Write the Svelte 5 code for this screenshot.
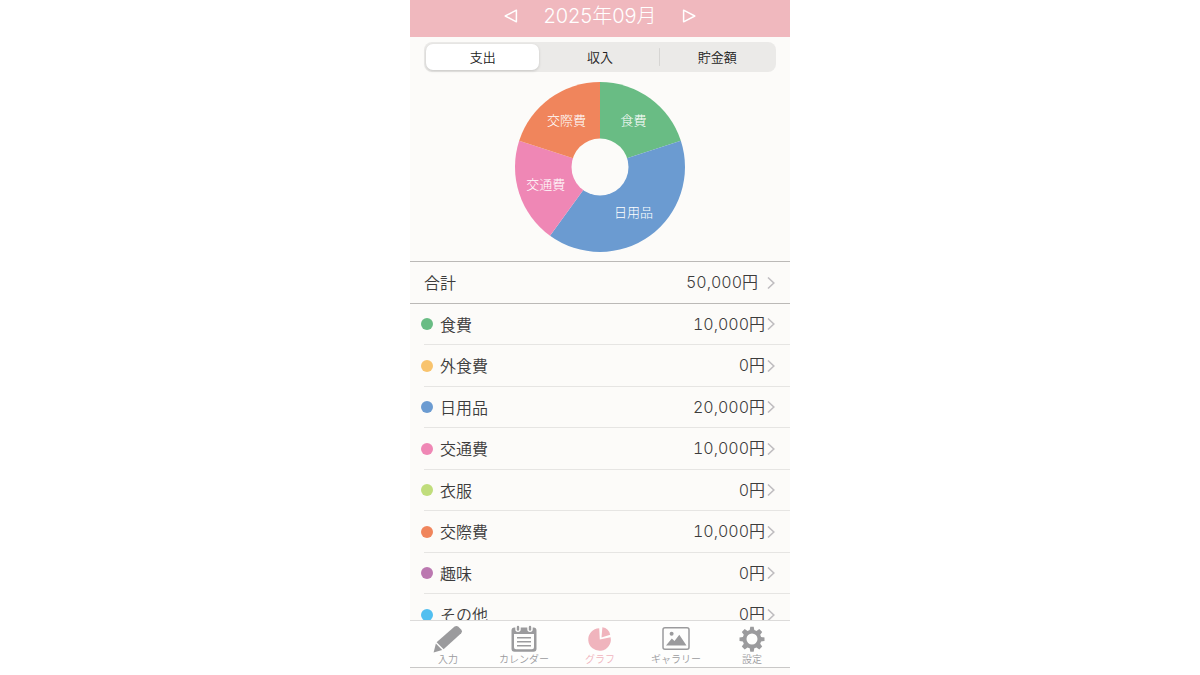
<script>
  const segments = ['支出', '収入', '貯金額'];

  const categories = [
    { name: '食費', amount: 10000, color: '#69bc84' },
    { name: '外食費', amount: 0, color: '#f8c36d' },
    { name: '日用品', amount: 20000, color: '#6b9bd1' },
    { name: '交通費', amount: 10000, color: '#ef87b5' },
    { name: '衣服', amount: 0, color: '#c0dd7c' },
    { name: '交際費', amount: 10000, color: '#f0855c' },
    { name: '趣味', amount: 0, color: '#bb78b0' },
    { name: 'その他', amount: 0, color: '#51bff0' }
  ];

  const tabs = [
    { id: 'input', label: '入力' },
    { id: 'calendar', label: 'カレンダー' },
    { id: 'graph', label: 'グラフ' },
    { id: 'gallery', label: 'ギャラリー' },
    { id: 'settings', label: '設定' }
  ];

  const RADIUS = 85;
  const LABEL_RADIUS = 57;

  let year = $state(2025);
  let month = $state(9);
  let activeSegment = $state('支出');
  let activeTab = $state('graph');

  const total = categories.reduce((sum, c) => sum + c.amount, 0);
  const title = $derived(`${year}年${String(month).padStart(2, '0')}月`);

  // Point on a circle, measured clockwise from the top
  function point(fraction, radius) {
    const angle = fraction * Math.PI * 2;
    return [Math.sin(angle) * radius, -Math.cos(angle) * radius];
  }

  function buildSlices(items) {
    let start = 0;
    return items
      .filter((c) => c.amount > 0)
      .map((c) => {
        const share = c.amount / total;
        const [x1, y1] = point(start, RADIUS);
        const [x2, y2] = point(start + share, RADIUS);
        const [labelX, labelY] = point(start + share / 2, LABEL_RADIUS);
        const large = share > 0.5 ? 1 : 0;
        start += share;
        return {
          ...c,
          labelX,
          labelY,
          path: `M0 0L${x1} ${y1}A${RADIUS} ${RADIUS} 0 ${large} 1 ${x2} ${y2}Z`
        };
      });
  }

  const slices = buildSlices(categories);

  function yen(value) {
    return value.toLocaleString('en-US') + '円';
  }

  function moveMonth(step) {
    const next = year * 12 + (month - 1) + step;
    year = Math.floor(next / 12);
    month = (next % 12) + 1;
  }
</script>

{#snippet chevron()}
  <svg class="chevron" viewBox="0 0 8 14" aria-hidden="true">
    <path d="M1 1.5L6.8 7L1 12.5" />
  </svg>
{/snippet}

<div class="app">
  <header class="month-bar">
    <button aria-label="前の月" onclick={() => moveMonth(-1)}>
      <svg viewBox="0 0 14 14"><path d="M12.4 1.2V12.8L1.2 7Z" /></svg>
    </button>
    <h1>{title}</h1>
    <button aria-label="次の月" onclick={() => moveMonth(1)}>
      <svg viewBox="0 0 14 14"><path d="M1.6 1.2V12.8L12.8 7Z" /></svg>
    </button>
  </header>

  <main>
    <div class="segmented">
      {#each segments as segment}
        <button
          class:active={segment === activeSegment}
          aria-pressed={segment === activeSegment}
          onclick={() => (activeSegment = segment)}
        >
          {segment}
        </button>
      {/each}
    </div>

    <svg class="chart" viewBox="-85 -85 170 170" role="img" aria-label="支出グラフ">
      {#each slices as slice}
        <path d={slice.path} fill={slice.color} />
      {/each}
      <circle r="28.5" fill="#fcfbf9" />
      {#each slices as slice}
        <text x={slice.labelX} y={slice.labelY} dy="4">{slice.name}</text>
      {/each}
    </svg>

    <button class="row total">
      <span class="name">合計</span>
      <span class="amount">{yen(total)}</span>
      {@render chevron()}
    </button>

    <ul>
      {#each categories as category}
        <li>
          <button class="row">
            <span class="dot" style="background: {category.color}"></span>
            <span class="name">{category.name}</span>
            <span class="amount">{yen(category.amount)}</span>
            {@render chevron()}
          </button>
        </li>
      {/each}
    </ul>
  </main>

  <nav>
    {#each tabs as tab}
      <button class:active={tab.id === activeTab} onclick={() => (activeTab = tab.id)}>
        <svg viewBox="0 0 30 28" aria-hidden="true">
          {#if tab.id === 'input'}
            <path d="M3.6 17.2L21.6 1.6Q23.6 .2 25.4 1.8L28.4 4.8Q29.8 6.4 28.2 8.2L10.6 24.2Z" />
            <path d="M2.9 18.4L9.2 24.9L.6 27.4Z" />
          {:else if tab.id === 'calendar'}
            <path
              fill-rule="evenodd"
              d="M5.5 2.5H6.3V4.2A2.7 2.7 0 0 0 11.7 4.2V2.5H18.3V4.2A2.7 2.7 0 0 0 23.7 4.2V2.5H24.5Q27.5 2.5 27.5 5.5V23.7Q27.5 26.7 24.5 26.7H5.5Q2.5 26.7 2.5 23.7V5.5Q2.5 2.5 5.500 2.500ZM5 9V22.200Q5 24.200 7 24.200H23Q25 24.200 25 22.200V9Z"
            />
            <rect x="7.8" y=".8" width="2.4" height="5" rx="1.2" />
            <rect x="19.8" y=".8" width="2.4" height="5" rx="1.2" />
            <path d="M8 12h14v1.6h-14zM8 16h14v1.6h-14zM8 20h14v1.6h-14z" />
          {:else if tab.id === 'graph'}
            <path d="M14.2 3.2L14.8 14.6L25.6 12.2A11.300 11.300 0 1 1 14.200 3.200Z" />
            <path d="M17.400 2.300A9.500 9.500 0 0 1 25.200 9.800L16.500 12.500Z" />
          {:else if tab.id === 'gallery'}
            <rect x="2" y="2.8" width="26" height="21.4" rx="2" class="frame" />
            <circle cx="10.6" cy="8.8" r="2" />
            <path d="M5 20.5L10.8 13.4L13.5 16L18.3 9.8L25.5 20.5Z" />
          {:else}
            <path
              fill-rule="evenodd"
              d="M13.3 1.7h3.4l.6 3.4 2.2.9 2.8-2 2.9 2.9-2 2.8.9 2.2 3.4.6v3.4l-3.4.6-.9 2.2 2 2.8-2.9 2.9-2.8-2-2.2.9-.6 3.4h-3.4l-.6-3.4-2.2-.9-2.8 2-2.9-2.9 2-2.8-.9-2.2-3.4-.6v-3.4l3.4-.6.9-2.2-2-2.8 2.9-2.9 2.8 2 2.2-.9zM15 8.5a5.5 5.5 0 1 0 0 11a5.5 5.5 0 1 0 0-11z"
            />
          {/if}
        </svg>
        {tab.label}
      </button>
    {/each}
  </nav>
</div>

<style>
  :global(body) {
    margin: 0;
    background: #fff;
  }

  .app {
    display: flex;
    flex-direction: column;
    box-sizing: border-box;
    max-width: 380px;
    height: 100vh;
    margin: 0 auto;
    padding-bottom: 7px;
    overflow: hidden;
    background: #fcfbf9;
    color: #3c3c3c;
    font-family: 'Noto Sans CJK JP', sans-serif;
    font-weight: 350;
  }

  button {
    margin: 0;
    padding: 0;
    border: 0;
    background: none;
    color: inherit;
    font: inherit;
    cursor: pointer;
  }

  /* Month bar */
  .month-bar {
    display: flex;
    flex: none;
    justify-content: center;
    align-items: center;
    gap: 25px;
    padding-bottom: 5px;
    background: #f0b8be;
    color: #fff;
  }

  .month-bar h1 {
    margin: 0;
    font-family: Inter, 'Noto Sans CJK JP', sans-serif;
    font-size: 20px;
    font-weight: 300;
    line-height: 32px;
  }

  .month-bar svg {
    display: block;
    width: 14px;
    height: 14px;
    fill: none;
    stroke: #fff;
    stroke-width: 1.5;
    stroke-linejoin: round;
  }

  main {
    display: flex;
    flex: 1;
    flex-direction: column;
    min-height: 0;
    overflow: hidden;
  }

  /* Segmented control */
  .segmented {
    display: grid;
    flex: none;
    grid-template-columns: repeat(3, 1fr);
    margin: 5px 14px 0;
    border-radius: 8px;
    background: #ebeae8;
  }

  .segmented button {
    border-radius: 7px;
    color: #222;
    font-size: 13px;
    line-height: 30px;
  }

  .segmented button.active {
    margin: 2px;
    background: #fff;
    box-shadow: 0 1px 3px rgba(0, 0, 0, 0.16);
    line-height: 26px;
  }

  .segmented button:last-child:not(.active) {
    background: linear-gradient(#d6d5d3, #d6d5d3) left center / 1px 18px no-repeat;
  }

  /* Chart */
  .chart {
    flex: none;
    align-self: center;
    width: 170px;
    margin: 10px 0 9px;
  }

  .chart text {
    fill: #fff;
    font-size: 13px;
    font-weight: 300;
    text-anchor: middle;
  }

  /* Rows */
  .row {
    display: flex;
    align-items: center;
    width: 100%;
    padding-right: 15px;
    font-size: 16px;
    line-height: 41px;
    text-align: left;
  }

  .total {
    flex: none;
    padding-left: 14px;
    border: solid #bbb9b7;
    border-width: 1px 0;
  }

  .total .chevron {
    margin-left: 9px;
  }

  .name {
    flex: 1;
  }

  .amount {
    font-family: Inter, 'Noto Sans CJK JP', sans-serif;
    font-variant-numeric: tabular-nums;
  }

  .chevron {
    width: 8px;
    height: 14px;
    margin-left: 2px;
    fill: none;
    stroke: #bfbdc0;
    stroke-width: 1.6;
  }

  .dot {
    width: 12px;
    height: 12px;
    margin-right: 7px;
    border-radius: 50%;
  }

  ul {
    margin: 0;
    padding: 0;
    list-style: none;
  }

  li {
    margin-left: 14px;
    border-bottom: 1px solid #e6e5e3;
  }

  li .row {
    width: calc(100% + 3px);
    margin-left: -3px;
    line-height: 40px;
  }

  li:nth-child(even) .row {
    line-height: 41px;
  }

  /* Tab bar */
  nav {
    display: flex;
    flex: none;
    border-top: 1px solid #dcdbda;
    border-bottom: 1px solid #c9c8c7;
    background: #fefefd;
  }

  nav button {
    display: flex;
    flex: 1;
    flex-direction: column;
    align-items: center;
    padding: 4px 0 3px;
    color: #9b9b9d;
    font-size: 10px;
    line-height: 11px;
  }

  nav button.active {
    color: #f0b4bd;
  }

  nav svg {
    width: 30px;
    height: 28px;
    fill: currentColor;
  }

  nav .frame {
    fill: none;
    stroke: currentColor;
    stroke-width: 1.5;
  }
</style>
